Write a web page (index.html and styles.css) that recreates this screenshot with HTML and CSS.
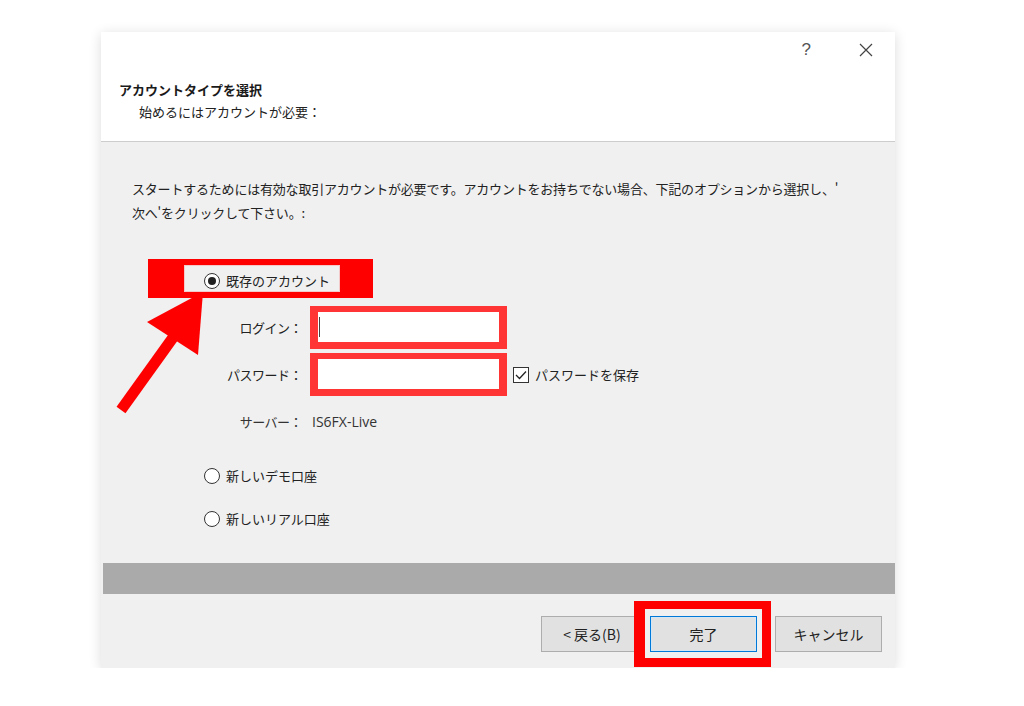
FILE: index.html
```html
<!DOCTYPE html>
<html lang="ja">
<head>
  <meta charset="UTF-8">
  <title>アカウントタイプを選択</title>
  <link rel="stylesheet" href="styles.css">
</head>
<body>
  <div class="dialog">
    <div class="header">
      <div class="controls">
        <span class="help">?</span>
        <svg class="close" width="14" height="14" viewBox="0 0 14 14">
          <path d="M1 1L13 13M13 1L1 13" stroke="#444" stroke-width="1.2" fill="none"/>
        </svg>
      </div>
      <div class="title">アカウントタイプを選択</div>
      <div class="subtitle">始めるにはアカウントが必要：</div>
    </div>

    <div class="content">
      <p class="intro">スタートするためには有効な取引アカウントが必要です。アカウントをお持ちでない場合、下記のオプションから選択し、'<br>次へ'をクリックして下さい。:</p>

      <div class="options">
        <label class="radio-row first">
          <span class="radio checked"></span>既存のアカウント
        </label>

        <div class="form-row login">
          <span class="label">ログイン：</span>
          <div class="field"><span class="caret"></span></div>
        </div>
        <div class="form-row pass">
          <span class="label">パスワード：</span>
          <div class="field"></div>
          <span class="checkbox">
            <svg width="12" height="10" viewBox="0 0 12 10"><path d="M1 5L4.5 8.5L11 1.5" stroke="#222" stroke-width="1.3" fill="none"/></svg>
          </span>
          <span class="check-label">パスワードを保存</span>
        </div>
        <div class="server-row">
          <span class="label">サーバー：</span>
          <span class="value">IS6FX-Live</span>
        </div>

        <label class="radio-row demo">
          <span class="radio"></span>新しいデモ口座
        </label>
        <label class="radio-row real">
          <span class="radio"></span>新しいリアル口座
        </label>
      </div>
    </div>

    <div class="bar"></div>

    <div class="footer">
      <button class="btn back">&lt; 戻る(B)</button>
      <button class="btn finish">完了</button>
      <button class="btn cancel">キャンセル</button>
    </div>

    <!-- annotations -->
    <div class="mark mark-radio"></div>
    <div class="mark mark-finish"></div>
    <svg class="arrow" width="120" height="160" viewBox="0 0 120 160">
      <line x1="20" y1="146" x2="76" y2="68" stroke="#ff0000" stroke-width="11"/>
      <polygon points="102,28 46,58 97,91" fill="#ff0000"/>
    </svg>
  </div>
</body>
</html>
```

FILE: styles.css
```css
body {
  margin: 0;
  background: #fff;
  font-family: "Noto Sans CJK JP", "Noto Sans", sans-serif;
  font-size: 13px;
  color: #222;
}
.dialog {
  position: relative;
  width: 794px;
  height: 636px;
  margin: 32px 0 0 101px;
  background: #f0f0f0;
  box-shadow: 0 2px 12px rgba(0,0,0,0.14);
  display: flex;
  flex-direction: column;
}
.header {
  height: 109px;
  background: #fff;
  border-bottom: 1px solid #cdcdcd;
  padding-left: 18px;
  box-sizing: content-box;
}
.controls {
  height: 36px;
  display: flex;
  align-items: center;
  justify-content: flex-end;
  padding-right: 22px;
}
.help {
  font-family: "Liberation Sans", sans-serif;
  font-size: 17px;
  color: #555;
  margin-right: 48px;
}
.title {
  margin-top: 12px;
  line-height: 20px;
  font-weight: bold;
  color: #1a1a1a;
}
.subtitle {
  margin-top: 2px;
  line-height: 20px;
  padding-left: 20px;
}
.content {
  height: 421px;
  padding: 35px 0 0 31px;
  box-sizing: border-box;
}
.intro {
  margin: 0;
  line-height: 24px;
  letter-spacing: -0.2px;
}
.options {
  margin-left: 72px;
  display: flex;
  flex-direction: column;
}
.radio-row {
  display: flex;
  align-items: center;
  height: 20px;
  line-height: 20px;
}
.radio-row.first { margin-top: 46px; }
.radio-row.demo { margin-top: 35px; }
.radio-row.real { margin-top: 23px; }
.radio {
  width: 14px;
  height: 14px;
  border: 1px solid #333;
  border-radius: 50%;
  background: #fff;
  margin-right: 6px;
  display: flex;
  align-items: center;
  justify-content: center;
}
.radio.checked::after {
  content: "";
  width: 8px;
  height: 8px;
  border-radius: 50%;
  background: #222;
}
.form-row {
  display: flex;
  align-items: center;
}
.form-row.login { margin-top: 15px; }
.form-row.pass { margin-top: 4px; }
.label {
  width: 98px;
  text-align: right;
  margin-right: 8px;
  flex: none;
  letter-spacing: -0.5px;
}
.field {
  width: 181px;
  height: 30px;
  background: #fff;
  border: 8px solid #ff3535;
  border-top-width: 6px;
  border-bottom-width: 7px;
  display: flex;
  align-items: center;
}
.caret {
  width: 1px;
  height: 20px;
  background: #444;
  margin-left: 1px;
}
.checkbox {
  width: 14px;
  height: 14px;
  border: 1px solid #333;
  background: #fff;
  margin-left: 6px;
  margin-right: 6px;
  display: flex;
  align-items: center;
  justify-content: center;
}
.server-row {
  display: flex;
  align-items: center;
  height: 20px;
  margin-top: 15px;
  color: #333;
}
.server-row .label {
  margin-right: 10px;
}
.server-row .value {
  font-family: "Open Sans", "Noto Sans", sans-serif;
  font-size: 14px;
}
.bar {
  height: 31px;
  background: #aaaaaa;
  margin-left: 2px;
}
.footer {
  flex: 1;
  display: flex;
  justify-content: flex-end;
  align-items: flex-start;
  padding: 22px 13px 0 0;
}
.btn {
  height: 36px;
  width: 107px;
  background: #e1e1e1;
  border: 1px solid #adadad;
  font-family: inherit;
  font-size: 14px;
  color: #222;
  padding: 0;
}
.btn.back {
  width: 102px;
  margin-right: 7px;
}
.btn.finish {
  border: 1px solid #0078d7;
  box-shadow: inset 0 0 0 1px #d5e6f5;
  margin-right: 18px;
}
.mark {
  position: absolute;
  box-sizing: border-box;
  border-style: solid;
  border-color: #ff0000;
}
.mark-radio {
  left: 47px;
  top: 227px;
  width: 225px;
  height: 39px;
  border-width: 6px 33px 6px 36px;
  box-shadow: inset 0 0 0 1px #f4c9c9;
}
.mark-finish {
  left: 533px;
  top: 569px;
  width: 137px;
  height: 66px;
  border-width: 8px 9px 9px 11px;
}
.arrow {
  position: absolute;
  left: 0;
  top: 232px;
}
```
